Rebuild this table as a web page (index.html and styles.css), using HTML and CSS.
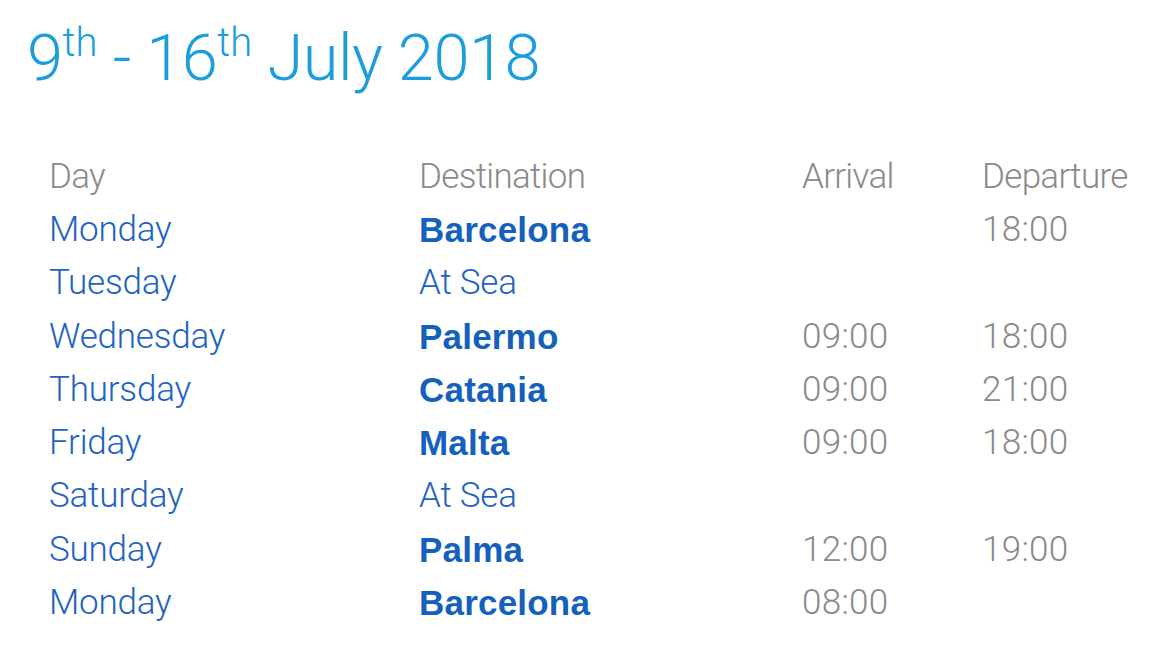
FILE: index.html
```html
<!DOCTYPE html>
<html>
<head>
<meta charset="utf-8">
<link rel="stylesheet" href="styles.css">
</head>
<body>
<div class="page">
  <h1 class="title">9<sup>th</sup> - 16<sup>th</sup> July 2018</h1>
  <div class="itinerary">
    <div class="cell head">Day</div>
    <div class="cell head">Destination</div>
    <div class="cell head">Arrival</div>
    <div class="cell head">Departure</div>

    <div class="cell day">Monday</div>
    <div class="cell dest">Barcelona</div>
    <div class="cell time"></div>
    <div class="cell time">18:00</div>

    <div class="cell day">Tuesday</div>
    <div class="cell sea">At Sea</div>
    <div class="cell time"></div>
    <div class="cell time"></div>

    <div class="cell day">Wednesday</div>
    <div class="cell dest">Palermo</div>
    <div class="cell time">09:00</div>
    <div class="cell time">18:00</div>

    <div class="cell day">Thursday</div>
    <div class="cell dest">Catania</div>
    <div class="cell time">09:00</div>
    <div class="cell time">21:00</div>

    <div class="cell day">Friday</div>
    <div class="cell dest">Malta</div>
    <div class="cell time">09:00</div>
    <div class="cell time">18:00</div>

    <div class="cell day">Saturday</div>
    <div class="cell sea">At Sea</div>
    <div class="cell time"></div>
    <div class="cell time"></div>

    <div class="cell day">Sunday</div>
    <div class="cell dest">Palma</div>
    <div class="cell time">12:00</div>
    <div class="cell time">19:00</div>

    <div class="cell day">Monday</div>
    <div class="cell dest">Barcelona</div>
    <div class="cell time">08:00</div>
    <div class="cell time"></div>
  </div>
</div>
</body>
</html>
```
FILE: styles.css
```css
html, body {
  margin: 0;
  padding: 0;
  background: #ffffff;
}
body {
  font-family: Roboto, "Liberation Sans", sans-serif;
  font-weight: 300;
}
.page {
  width: 1152px;
  height: 656px;
  box-sizing: border-box;
  padding: 20px 0 0 27px;
  overflow: hidden;
}
.title {
  margin: 0;
  font-size: 65px;
  font-weight: 300;
  line-height: 76px;
  color: #1d9ddc;
  letter-spacing: -0.5px;
  white-space: nowrap;
}
.title sup {
  font-size: 40px;
  line-height: 0;
  vertical-align: 0;
  position: relative;
  top: -24px;
  letter-spacing: 0;
}
.itinerary {
  margin: 54px 0 0 22px;
  display: grid;
  grid-template-columns: 370px 383px 180px 1fr;
  grid-auto-rows: 53.3px;
  align-items: center;
}
.cell {
  font-size: 35px;
  line-height: 40px;
  white-space: nowrap;
  letter-spacing: -0.2px;
}
.head {
  color: #8a8a8a;
  letter-spacing: -0.7px;
}
.time {
  color: #8a8a8a;
  letter-spacing: 0.3px;
}
.day, .sea {
  color: #2162c2;
}
.dest {
  color: #1460bd;
  font-family: "Liberation Sans", Arial, sans-serif;
  font-weight: 700;
  font-size: 35px;
  letter-spacing: 0.2px;
}
```
